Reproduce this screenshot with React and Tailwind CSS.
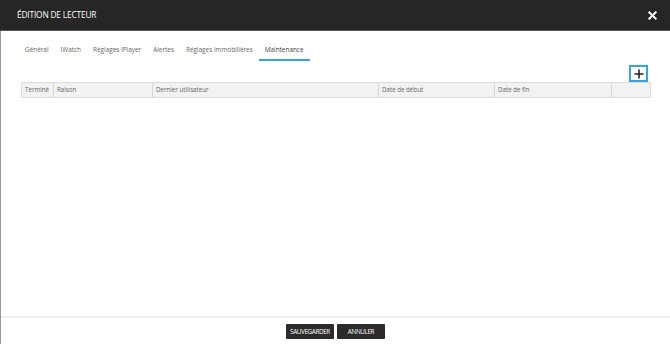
import React from "react";

const tabs = ["Général", "IWatch", "Réglages IPlayer", "Alertes", "Réglages immobilières", "Maintenance"];
const cols = [
  { label: "Terminé", w: "w-[32px]" },
  { label: "Raison", w: "w-[99px]" },
  { label: "Dernier utilisateur", w: "w-[226px]" },
  { label: "Date de début", w: "w-[116px]" },
  { label: "Date de fin", w: "w-[117px]" },
  { label: "", w: "flex-1" },
];

export default function App() {
  return (
    <div className="w-[670px] h-[344px] flex flex-col bg-white overflow-hidden" style={{ fontFamily: '"Open Sans", sans-serif' }}>
      <div className="h-[31px] shrink-0 bg-[#262626] border-b border-[#555] flex items-center justify-between pl-[17px] pr-[13px]">
        <span className="text-white text-[8.3px] tracking-[-0.15px]">ÉDITION DE LECTEUR</span>
        <svg width="9" height="9" viewBox="0 0 10 10">
          <path d="M1.5 1.5 L8.5 8.5 M8.5 1.5 L1.5 8.5" stroke="white" strokeWidth="2.2" strokeLinecap="square" />
        </svg>
      </div>
      <div className="flex-1 flex flex-col border-l border-[#9a9a9a]">
        <div className="flex-1 flex flex-col pl-[20px] pr-[19px]">
          <div className="flex items-end h-[30px] pl-[4px] gap-[12px] text-[6.4px] text-[#666]">
            {tabs.map((t, i) => (
              <div key={t} className={`pb-[4px] ${i === 5 ? "border-b-2 border-[#3aa3db] text-[#444] px-[6px] mx-[-6px]" : "border-b-2 border-transparent"}`}>
                {t}
              </div>
            ))}
          </div>
          <div className="flex justify-end mt-[4px] pr-[3px]">
            <div className="w-[19px] h-[17px] border-2 border-[#3aa3db] bg-white flex items-center justify-center">
              <svg width="10" height="10" viewBox="0 0 10 10">
                <path d="M5 0.5 V9.5 M0.5 5 H9.5" stroke="#222" strokeWidth="1.6" />
              </svg>
            </div>
          </div>
          <div className="flex h-[16px] bg-[#f2f2f2] border border-[#dcdcdc] text-[6.2px] text-[#666]">
            {cols.map((c, i) => (
              <div key={i} className={`${c.w} flex items-center pl-[3px] ${i < cols.length - 1 ? "border-r border-[#d6d6d6]" : ""}`}>
                {c.label}
              </div>
            ))}
          </div>
        </div>
        <div className="h-[28px] shrink-0 border-t-2 border-[#efefef] flex items-center justify-center gap-[3px] pt-[1px]">
          <button className="w-[48px] h-[15px] bg-[#2b2b2b] text-white text-[6.3px] rounded-[1px] tracking-[-0.35px]">SAUVEGARDER</button>
          <button className="w-[48px] h-[15px] bg-[#2b2b2b] text-white text-[6.3px] rounded-[1px] tracking-[-0.35px]">ANNULER</button>
        </div>
      </div>
    </div>
  );
}
